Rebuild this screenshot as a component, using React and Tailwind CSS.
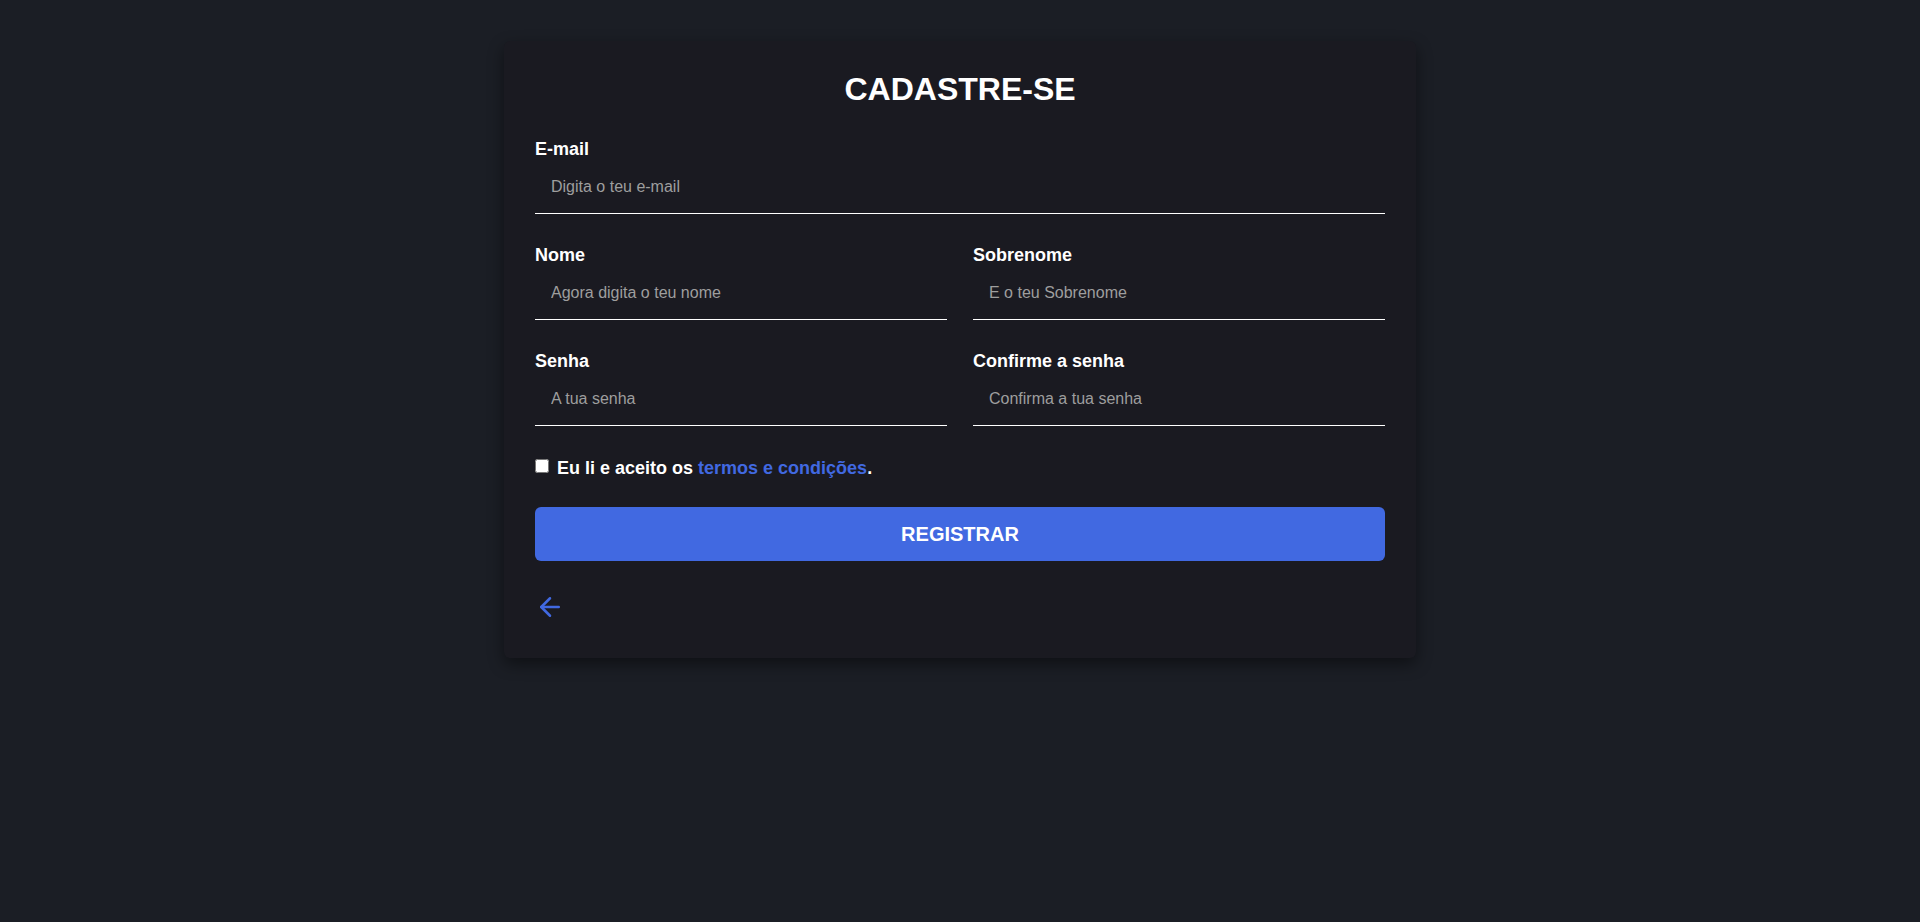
import React, { useState } from "react";
import { ArrowLeft } from "lucide-react";

const Field = ({ label, placeholder, type = "text" }) => (
  <div className="flex flex-col">
    <label className="text-[18px] leading-[21px] font-bold text-white">
      {label}
    </label>
    <input
      type={type}
      placeholder={placeholder}
      className="h-[54px] w-full bg-transparent px-4 text-[16px] text-white border-b border-white outline-none placeholder:text-[#9e9e9e]"
    />
  </div>
);

const App = () => {
  const [accepted, setAccepted] = useState(false);

  return (
    <div
      className="min-h-screen bg-[#1b1e25] flex justify-center pt-[41px]"
      style={{ fontFamily: '"Liberation Sans", Arial, sans-serif' }}
    >
      <div className="w-[912px] h-fit bg-[#1a1a21] rounded-md shadow-[0_6px_16px_rgba(0,0,0,0.45)] px-[31px] pt-[30px] pb-[36px]">
        <h1 className="text-[32px] leading-[37px] font-bold text-white text-center mb-[31px]">
          CADASTRE-SE
        </h1>

        <form onSubmit={(e) => e.preventDefault()} className="flex flex-col gap-[31px]">
          <Field label="E-mail" placeholder="Digita o teu e-mail" type="email" />

          <div className="grid grid-cols-2 gap-[26px]">
            <Field label="Nome" placeholder="Agora digita o teu nome" />
            <Field label="Sobrenome" placeholder="E o teu Sobrenome" />
          </div>

          <div className="grid grid-cols-2 gap-[26px]">
            <Field label="Senha" placeholder="A tua senha" type="password" />
            <Field label="Confirme a senha" placeholder="Confirma a tua senha" type="password" />
          </div>

          {/* termos */}
          <label className="flex items-start gap-[8px] text-[18px] leading-[21px] font-bold text-white mt-[1px]">
            <input
              type="checkbox"
              checked={accepted}
              onChange={(e) => setAccepted(e.target.checked)}
              className="w-[14px] h-[14px] mt-[1px]"
            />
            <span>
              Eu li e aceito os{" "}
              <a href="#" className="text-[#4169e1]">
                termos e condições
              </a>
              .
            </span>
          </label>
        </form>

        <button
          type="submit"
          className="mt-[28px] w-full h-[54px] rounded-md bg-[#4169e1] text-white text-[20px] font-bold"
        >
          REGISTRAR
        </button>

        <button type="button" className="mt-[31px] block text-[#4169e1]">
          <ArrowLeft size={30} strokeWidth={2} />
        </button>
      </div>
    </div>
  );
};

export default App;
